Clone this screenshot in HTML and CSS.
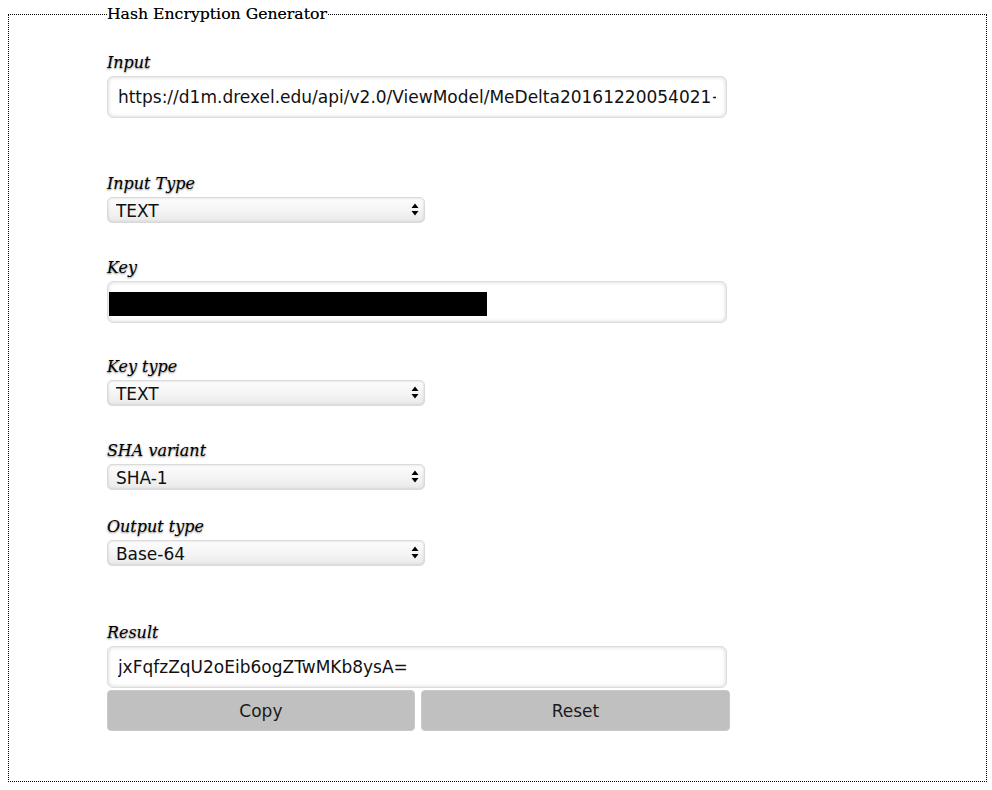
FILE: index.html
```html
<!DOCTYPE html>
<html>
<head>
<meta charset="utf-8">
<link rel="stylesheet" href="styles.css">
</head>
<body>
<fieldset class="panel">
  <legend class="panel-title">Hash Encryption Generator</legend>
  <div class="form">
    <div class="field">
      <label class="label">Input</label>
      <input class="text-input" type="text" value="https://d1m.drexel.edu/api/v2.0/ViewModel/MeDelta20161220054021+0000">
    </div>
    <div class="field field-wide">
      <label class="label">Input Type</label>
      <div class="select-wrap">
        <select class="select"><option>TEXT</option></select>
        <svg class="select-arrows" width="8" height="13" viewBox="0 0 8 13"><path d="M4 0.5 L7.5 5 L0.5 5 Z M4 12.5 L7.5 8 L0.5 8 Z" fill="#000"/></svg>
      </div>
    </div>
    <div class="field field-mid">
      <label class="label">Key</label>
      <div class="input-wrap">
        <input class="text-input" type="text" value="">
        <span class="redaction"></span>
      </div>
    </div>
    <div class="field field-up">
      <label class="label">Key type</label>
      <div class="select-wrap">
        <select class="select"><option>TEXT</option></select>
        <svg class="select-arrows" width="8" height="13" viewBox="0 0 8 13"><path d="M4 0.5 L7.5 5 L0.5 5 Z M4 12.5 L7.5 8 L0.5 8 Z" fill="#000"/></svg>
      </div>
    </div>
    <div class="field field-mid">
      <label class="label">SHA variant</label>
      <div class="select-wrap">
        <select class="select"><option>SHA-1</option></select>
        <svg class="select-arrows" width="8" height="13" viewBox="0 0 8 13"><path d="M4 0.5 L7.5 5 L0.5 5 Z M4 12.5 L7.5 8 L0.5 8 Z" fill="#000"/></svg>
      </div>
    </div>
    <div class="field field-tight">
      <label class="label">Output type</label>
      <div class="select-wrap">
        <select class="select"><option>Base-64</option></select>
        <svg class="select-arrows" width="8" height="13" viewBox="0 0 8 13"><path d="M4 0.5 L7.5 5 L0.5 5 Z M4 12.5 L7.5 8 L0.5 8 Z" fill="#000"/></svg>
      </div>
    </div>
    <div class="field field-result">
      <label class="label">Result</label>
      <input class="text-input" type="text" value="jxFqfzZqU2oEib6ogZTwMKb8ysA=">
      <div class="actions">
        <button class="btn">Copy</button>
        <button class="btn">Reset</button>
      </div>
    </div>
  </div>
</fieldset>
</body>
</html>
```

FILE: styles.css
```css
html, body {
  background: #fff;
}
body {
  margin: 8px 5px 8px 8px;
  font-family: "DejaVu Serif", serif;
  color: #000;
}
.panel {
  margin: 0;
  border: 1px dotted #000;
  padding: 33px 0 50px 10%;
  min-width: 0;
}
.panel-title {
  padding: 0;
  font-family: "DejaVu Serif", serif;
  font-size: 15.7px;
  line-height: 12px;
  color: #000;
  text-shadow: 0 0 0.4px rgba(0, 0, 0, 0.6);
}
.form {
  display: flex;
  flex-direction: column;
}
.field {
  display: flex;
  flex-direction: column;
  align-items: flex-start;
}
.field-wide {
  margin-top: 56px;
}
.field-mid {
  margin-top: 35px;
}
.field-up {
  margin-top: 34px;
}
.field-tight {
  margin-top: 27px;
}
.field-result {
  margin-top: 57px;
}
.label {
  display: block;
  font-family: "DejaVu Serif", serif;
  font-style: italic;
  font-size: 16px;
  line-height: 20px;
  margin-bottom: 3px;
  color: #000;
  text-shadow: 0 1px 2px rgba(0, 0, 0, 0.5);
}
.text-input {
  box-sizing: border-box;
  width: 620px;
  height: 42px;
  margin: 0;
  padding: 0 10px;
  border: 1px solid #dcdcdc;
  border-radius: 6px;
  background: #fff;
  box-shadow: inset 0 0 4px rgba(0, 0, 0, 0.18);
  font-family: "DejaVu Sans", sans-serif;
  font-size: 17px;
  color: #111;
  outline: none;
}
.input-wrap {
  position: relative;
}
.redaction {
  position: absolute;
  left: 2px;
  top: 11px;
  width: 378px;
  height: 24px;
  background: #000;
}
.select-wrap {
  position: relative;
  width: 318px;
  height: 26px;
}
.select {
  -webkit-appearance: none;
  appearance: none;
  box-sizing: border-box;
  width: 318px;
  height: 26px;
  margin: 0;
  padding: 1px 0 0 8px;
  border: 1px solid #dadada;
  border-radius: 5px;
  background: linear-gradient(#fdfdfd, #f3f3f3 60%, #e9e9e9);
  box-shadow: inset 0 0 3px rgba(0, 0, 0, 0.15);
  font-family: "DejaVu Sans", sans-serif;
  font-size: 17px;
  color: #111;
  outline: none;
}
.select-arrows {
  position: absolute;
  right: 6px;
  top: 6px;
  pointer-events: none;
}
.actions {
  display: grid;
  grid-template-columns: 308px 309px;
  column-gap: 6px;
  margin-top: 2px;
}
.btn {
  height: 41px;
  margin: 0;
  border: 1px solid #c9c9c9;
  border-radius: 4px;
  background: #c0c0c0;
  font-family: "DejaVu Sans", sans-serif;
  font-size: 17px;
  color: #1a1a1a;
}
```
